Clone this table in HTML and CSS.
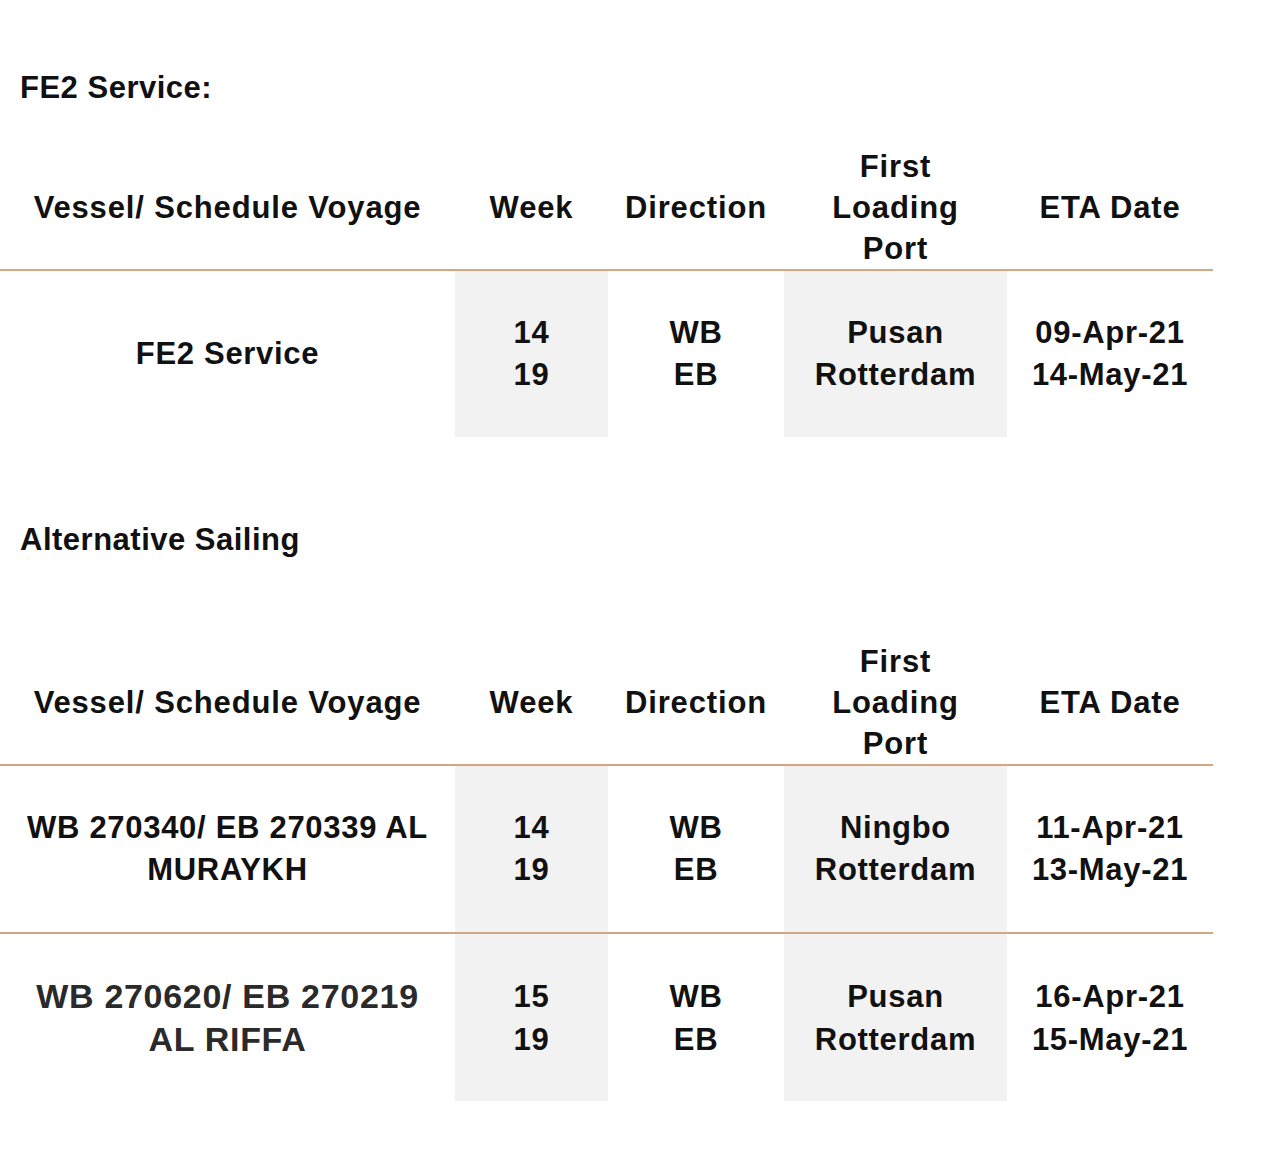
FILE: index.html
```html
<!DOCTYPE html>
<html lang="en">
<head>
<meta charset="utf-8">
<title>FE2 Service</title>
<link rel="stylesheet" href="styles.css">
</head>
<body>
<main class="page">
  <h2 class="title title-first">FE2 Service:</h2>
  <table class="sched">
    <colgroup>
      <col class="c-vessel"><col class="c-week"><col class="c-dir"><col class="c-port"><col class="c-eta">
    </colgroup>
    <thead>
      <tr>
        <th>Vessel/ Schedule Voyage</th>
        <th>Week</th>
        <th>Direction</th>
        <th>First<br>Loading<br>Port</th>
        <th>ETA Date</th>
      </tr>
    </thead>
    <tbody>
      <tr>
        <td>FE2 Service</td>
        <td class="shade">14<br>19</td>
        <td>WB<br>EB</td>
        <td class="shade">Pusan<br>Rotterdam</td>
        <td>09-Apr-21<br>14-May-21</td>
      </tr>
    </tbody>
  </table>

  <h2 class="title title-alt">Alternative Sailing</h2>
  <table class="sched">
    <colgroup>
      <col class="c-vessel"><col class="c-week"><col class="c-dir"><col class="c-port"><col class="c-eta">
    </colgroup>
    <thead>
      <tr>
        <th>Vessel/ Schedule Voyage</th>
        <th>Week</th>
        <th>Direction</th>
        <th>First<br>Loading<br>Port</th>
        <th>ETA Date</th>
      </tr>
    </thead>
    <tbody>
      <tr class="sep">
        <td>WB 270340/ EB 270339 AL<br>MURAYKH</td>
        <td class="shade">14<br>19</td>
        <td>WB<br>EB</td>
        <td class="shade">Ningbo<br>Rotterdam</td>
        <td>11-Apr-21<br>13-May-21</td>
      </tr>
      <tr class="last">
        <td class="big">WB 270620/ EB 270219<br>AL RIFFA</td>
        <td class="shade">15<br>19</td>
        <td>WB<br>EB</td>
        <td class="shade">Pusan<br>Rotterdam</td>
        <td>16-Apr-21<br>15-May-21</td>
      </tr>
    </tbody>
  </table>
</main>
</body>
</html>
```

FILE: styles.css
```css
html, body {
  margin: 0;
  padding: 0;
  background: #ffffff;
}

body {
  font-family: "Liberation Sans", Arial, Helvetica, sans-serif;
  font-weight: bold;
  color: #111111;
  font-size: 31px;
  letter-spacing: 0.7px;
}

.page {
  width: 1280px;
  padding-top: 70px;
}

.title {
  margin: 0;
  padding-left: 20px;
  font-size: 31px;
  line-height: 36px;
  font-weight: bold;
  letter-spacing: 0.5px;
}

.title-first {
  margin-bottom: 40px;
}

.title-alt {
  margin-top: 85px;
  margin-bottom: 83px;
}

.sched {
  border-collapse: collapse;
  border-spacing: 0;
  width: 1213px;
  table-layout: fixed;
}

.c-vessel { width: 455px; }
.c-week { width: 153px; }
.c-dir { width: 176px; }
.c-port { width: 223px; }
.c-eta { width: 206px; }

.sched th {
  padding: 0;
  line-height: 41px;
  text-align: center;
  vertical-align: middle;
  font-weight: bold;
  letter-spacing: 0.85px;
  border-bottom: 2px solid #d2a882;
}

.sched td {
  padding: 0;
  height: 166px;
  line-height: 42px;
  text-align: center;
  vertical-align: middle;
}

.sched td.shade {
  background: #f2f2f2;
}

.sched tr.sep td {
  border-bottom: 2px solid #d2a882;
}

.sched tr.last td {
  height: 167px;
  line-height: 43px;
}

.sched td.big {
  font-size: 34px;
  letter-spacing: 0.7px;
  color: #2a2a2a;
}
```
